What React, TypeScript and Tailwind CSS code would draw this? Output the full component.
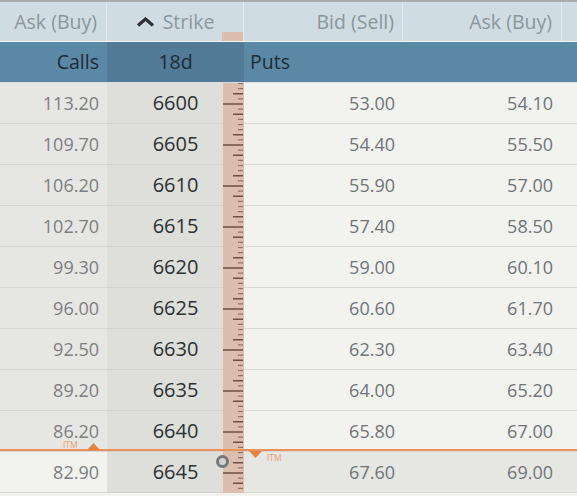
import React from 'react';

const rows = [
  { call: '113.20', strike: '6600', bid: '53.00', ask: '54.10' },
  { call: '109.70', strike: '6605', bid: '54.40', ask: '55.50' },
  { call: '106.20', strike: '6610', bid: '55.90', ask: '57.00' },
  { call: '102.70', strike: '6615', bid: '57.40', ask: '58.50' },
  { call: '99.30', strike: '6620', bid: '59.00', ask: '60.10' },
  { call: '96.00', strike: '6625', bid: '60.60', ask: '61.70' },
  { call: '92.50', strike: '6630', bid: '62.30', ask: '63.40' },
  { call: '89.20', strike: '6635', bid: '64.00', ask: '65.20' },
  { call: '86.20', strike: '6640', bid: '65.80', ask: '67.00' },
  { call: '82.90', strike: '6645', bid: '67.60', ask: '69.00' },
];

// tick kinds from the top of a row; the long one sits on the strike
const ticks: ('s' | 'm' | 'l')[] = ['s', 's', 'm', 's', 'l', 's', 'm', 's'];

function Ruler() {
  return (
    <svg width="21" height="41" className="block">
      {ticks.map((t, i) => {
        const y = 0.5 + i * 5.125;
        const x1 = t === 'l' ? 0 : t === 'm' ? 10 : 15;
        const color = t === 's' ? '#8f7262' : '#6f4f3f';
        return <line key={i} x1={x1} x2={20} y1={y} y2={y} stroke={color} strokeWidth={t === 's' ? 1.2 : 1.5} />;
      })}
    </svg>
  );
}

const SHADE = 'bg-[#e6e6e2]';
const LIGHT = 'bg-[#f2f2ee]';

export default function App() {
  return (
    <div
      className="relative w-[577px] h-[496px] overflow-hidden bg-[#f2f2ee]"
      style={{ fontFamily: '"Open Sans", "Noto Sans", sans-serif' }}
    >
      {/* column titles */}
      <div className="flex h-[42px] border-t-2 border-[#a8acab] border-b border-b-[#f4f7f8] bg-[#cfdde2] text-[19.5px] text-[#8b969b]">
        <div className="w-[107px] flex items-center justify-end pr-[9px] border-r border-[#e3eaed]">Ask (Buy)</div>
        <div className="relative w-[137px] flex items-center justify-center gap-[8px] border-r border-[#e3eaed]">
          <svg width="19" height="10" viewBox="0 0 19 10">
            <polyline points="2,8.5 9.5,2 17,8.5" fill="none" stroke="#2f3336" strokeWidth="3.2" />
          </svg>
          <span>Strike</span>
          <div className="absolute right-0 bottom-0 w-[21px] h-[9px] bg-[#dcbeac]" />
        </div>
        <div className="w-[159px] flex items-center justify-end pr-[8px] border-r border-[#e3eaed]">Bid (Sell)</div>
        <div className="w-[159px] flex items-center justify-end pr-[9px] border-r border-[#e3eaed]">Ask (Buy)</div>
        <div className="flex-1" />
      </div>

      {/* expiry row */}
      <div className="flex h-[41px] border-b border-[#d7dfe3] bg-[#5b88a5] text-[19.5px] text-[#1e2c36]">
        <div className="w-[107px] flex items-center justify-end pr-[8px]">Calls</div>
        <div className="w-[137px] flex items-center justify-center bg-[#517b97]">18d</div>
        <div className="flex-1 flex items-center pl-[6px]">Puts</div>
      </div>

      {/* chain */}
      <div className="flex flex-col leading-none">
        {rows.map((r, i) => {
          const belowAtm = i === rows.length - 1;
          return (
            <div key={r.strike} className="flex h-[41px]">
              <div
                className={`w-[107px] flex items-center justify-end pr-[8px] border-b border-[#d6d6d2] text-[18px] text-[#7c7f82] ${belowAtm ? LIGHT : SHADE}`}
              >
                {r.call}
              </div>
              <div className="w-[116px] flex items-center justify-center pl-[21px] border-b border-[#d2d2ce] bg-[#dededa] text-[20px] text-[#2c3134]">
                {r.strike}
              </div>
              <div className="w-[21px] bg-[#dcbeac]">
                <Ruler />
              </div>
              <div
                className={`flex-1 flex border-b border-[#d9d9d5] text-[18px] text-[#6f7579] ${belowAtm ? SHADE : LIGHT}`}
              >
                <div className="w-[159px] flex items-center justify-end pr-[8px]">{r.bid}</div>
                <div className="w-[159px] flex items-center justify-end pr-[9px]">{r.ask}</div>
              </div>
            </div>
          );
        })}
      </div>

      {/* in-the-money boundary */}
      <div className="absolute left-0 right-0 top-[449px] h-[2px] bg-[#e9905e]" />
      <span className="absolute left-[63px] top-[441px] text-[8.5px] leading-none text-[#ec9b6c]">ITM</span>
      <svg className="absolute left-[87px] top-[443px]" width="13" height="7" viewBox="0 0 13 7">
        <polygon points="0,7 6.5,0 13,7" fill="#e8823f" />
      </svg>
      <svg className="absolute left-[249px] top-[451px]" width="13" height="7" viewBox="0 0 13 7">
        <polygon points="0,0 6.5,7 13,0" fill="#e8823f" />
      </svg>
      <span className="absolute left-[267px] top-[454px] text-[8.5px] leading-none text-[#ec9b6c]">ITM</span>
      <div className="absolute left-[216px] top-[455px] w-[13px] h-[13px] rounded-full border-[3px] border-[#76797a] bg-[#d2d2ce]" />
    </div>
  );
}
